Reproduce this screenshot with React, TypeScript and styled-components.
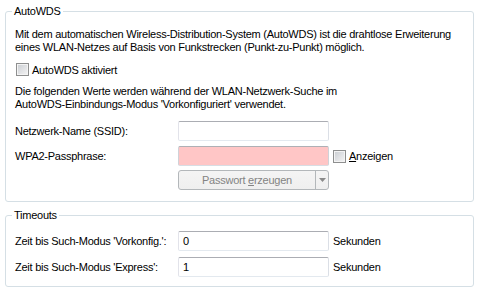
import React from "react";
import styled, { createGlobalStyle } from "styled-components";

const GlobalStyle = createGlobalStyle`
  html, body {
    margin: 0;
    padding: 0;
    background: #ffffff;
  }
  body {
    font-family: "Liberation Sans", Arial, sans-serif;
    font-size: 11px;
    letter-spacing: -0.25px;
    color: #000000;
  }
  * {
    box-sizing: border-box;
  }
`;

const Page = styled.div`
  width: 480px;
  height: 296px;
  padding: 4px 6px 0 5px;
  display: flex;
  flex-direction: column;
  gap: 6px;
`;

const Group = styled.fieldset`
  margin: 0;
  padding: 0;
  min-width: 0;
  border: 1px solid #d5dfe5;
  border-radius: 3px;
`;

const Legend = styled.legend`
  margin-left: 6px;
  padding: 0 2px;
  line-height: 14px;
`;

const Body = styled.div<{ $top: number; $bottom: number }>`
  display: flex;
  flex-direction: column;
  padding: ${(p) => p.$top}px 9px ${(p) => p.$bottom}px 9px;
`;

const Text = styled.p<{ $space?: number }>`
  margin: ${(p) => p.$space ?? 0}px 0 0 0;
  line-height: 13px;
`;

const Row = styled.div<{ $space?: number }>`
  display: grid;
  grid-template-columns: 163px 151px auto;
  align-items: center;
  margin-top: ${(p) => p.$space ?? 0}px;
  height: 20px;
  & > :nth-child(3) {
    margin-left: 4px;
  }
`;

const CheckRow = styled.label<{ $space?: number }>`
  display: flex;
  align-items: center;
  gap: 3px;
  height: 13px;
  margin-top: ${(p) => p.$space ?? 0}px;
  margin-left: 1px;
`;

const Box = styled.span`
  width: 13px;
  height: 13px;
  border: 1px solid #8e8f8f;
  background: linear-gradient(135deg, #c9cdd2 0%, #e4e5e7 60%, #f4f4f4 100%);
  box-shadow: inset 0 0 0 1px #f4f4f4;
  flex: none;
`;

const Field = styled.div<{ $pink?: boolean }>`
  height: 20px;
  border: 1px solid;
  border-color: ${(p) =>
    p.$pink ? "#aeb0b5 #cfd2d8 #d8dde3 #cfd2d8" : "#abadb3 #dbdfe6 #e3e9ef #e2e3ea"};
  border-radius: 2px;
  background: ${(p) => (p.$pink ? "#ffc6c6" : "#ffffff")};
  padding: 0 4px;
  display: flex;
  align-items: center;
`;

const SplitButton = styled.div`
  grid-column: 2;
  height: 20px;
  display: flex;
  border: 1px solid #b3b7ba;
  border-radius: 3px;
  background: linear-gradient(#f4f4f4, #efefef);
  color: #838383;
`;

const ButtonLabel = styled.span`
  flex: 1;
  display: flex;
  align-items: center;
  justify-content: center;
`;

const ArrowPart = styled.span`
  width: 13px;
  border-left: 1px solid #b3b7ba;
  display: flex;
  align-items: center;
  justify-content: center;
`;

const Key = styled.u`
  text-decoration: underline;
`;

export default function App() {
  return (
    <>
      <GlobalStyle />
      <Page>
        <Group>
          <Legend>AutoWDS</Legend>
          <Body $top={10} $bottom={11}>
            <Text>
              Mit dem automatischen Wireless-Distribution-System (AutoWDS) ist die drahtlose Erweiterung
              <br />
              eines WLAN-Netzes auf Basis von Funkstrecken (Punkt-zu-Punkt) möglich.
            </Text>
            <CheckRow $space={9}>
              <Box />
              AutoWDS aktiviert
            </CheckRow>
            <Text $space={9}>
              Die folgenden Werte werden während der WLAN-Netzwerk-Suche im
              <br />
              AutoWDS-Einbindungs-Modus 'Vorkonfiguriert' verwendet.
            </Text>
            <Row $space={10}>
              <span>Netzwerk-Name (SSID):</span>
              <Field />
            </Row>
            <Row $space={5}>
              <span>WPA2-Passphrase:</span>
              <Field $pink />
              <CheckRow>
                <Box />
                <span>
                  <Key>A</Key>nzeigen
                </span>
              </CheckRow>
            </Row>
            <Row $space={4}>
              <SplitButton>
                <ButtonLabel>
                  Passwort&nbsp;<Key>e</Key>rzeugen
                </ButtonLabel>
                <ArrowPart>
                  <svg width="7" height="4" viewBox="0 0 7 4">
                    <path d="M0 0 H7 L3.5 4 Z" fill="#8a8a8a" />
                  </svg>
                </ArrowPart>
              </SplitButton>
            </Row>
          </Body>
        </Group>
        <Group>
          <Legend>Timeouts</Legend>
          <Body $top={9} $bottom={9}>
            <Row>
              <span>Zeit bis Such-Modus 'Vorkonfig.':</span>
              <Field>0</Field>
              <span>Sekunden</span>
            </Row>
            <Row $space={6}>
              <span>Zeit bis Such-Modus 'Express':</span>
              <Field>1</Field>
              <span>Sekunden</span>
            </Row>
          </Body>
        </Group>
      </Page>
    </>
  );
}
